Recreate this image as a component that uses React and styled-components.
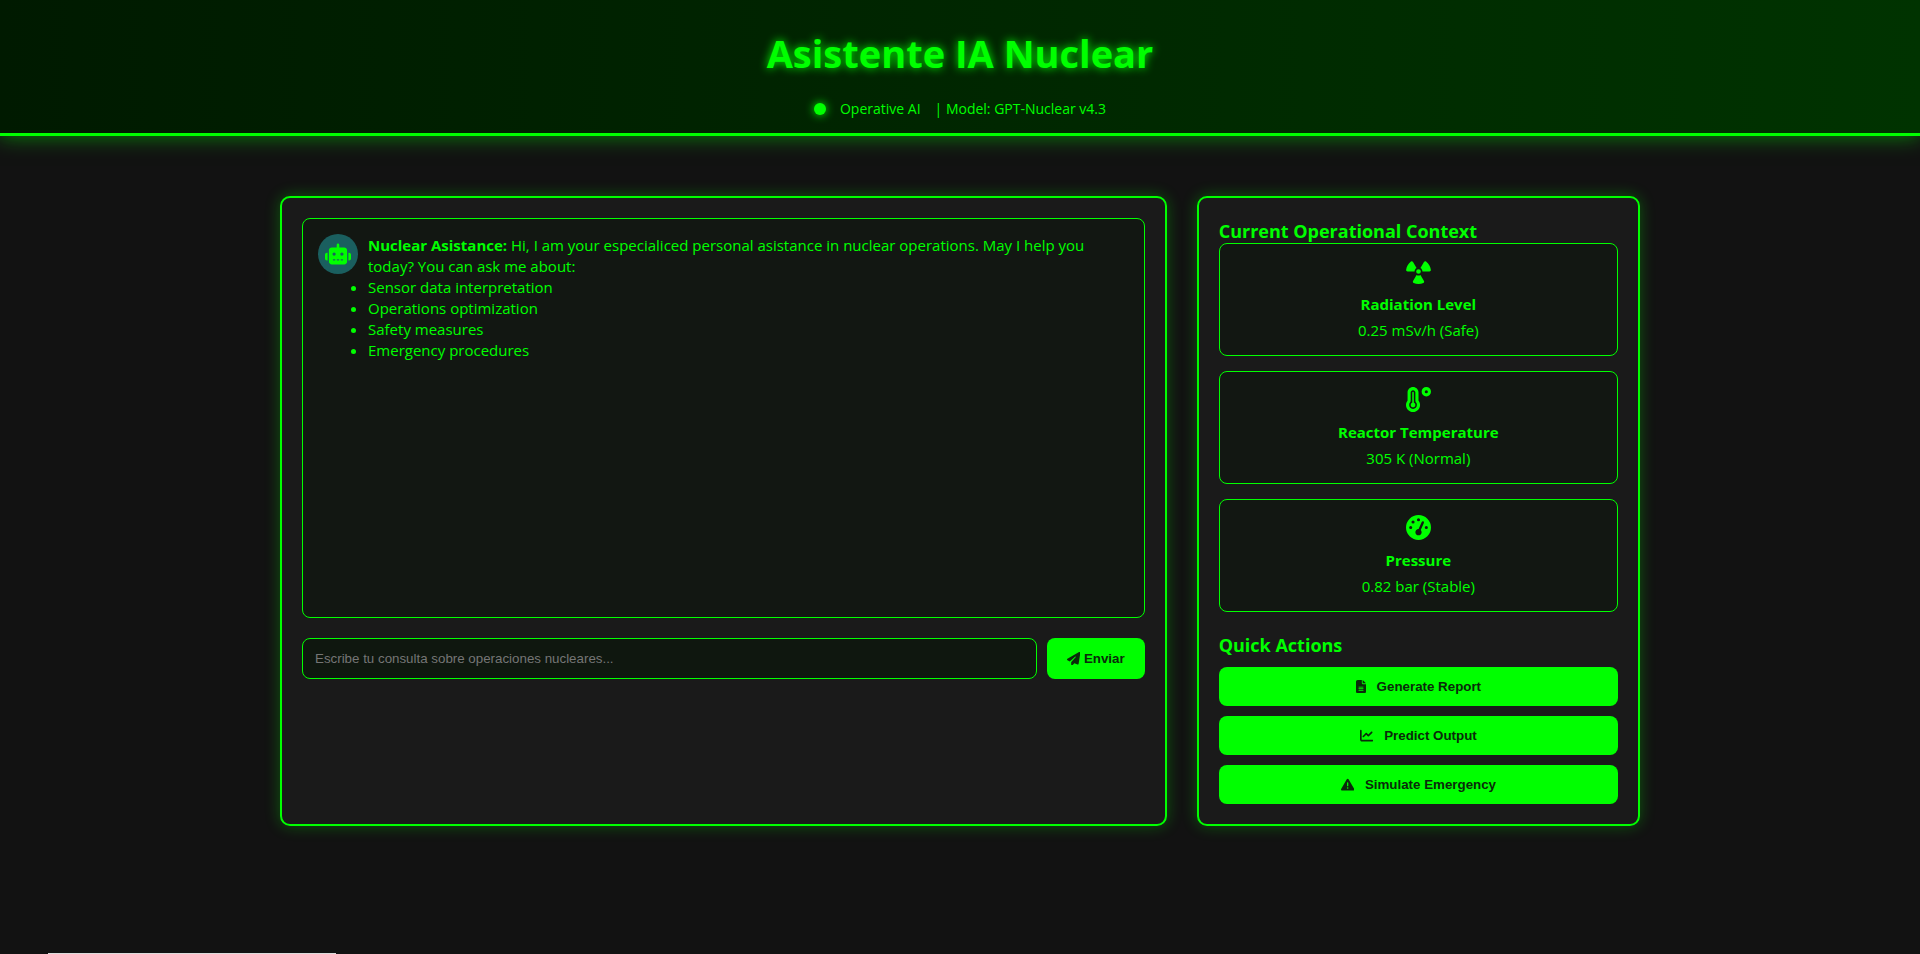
import React from "react";
import styled, { createGlobalStyle } from "styled-components";
import {
  FaRobot,
  FaPaperPlane,
  FaRadiation,
  FaTemperatureHigh,
  FaGaugeHigh,
  FaFileLines,
  FaChartLine,
  FaTriangleExclamation,
} from "react-icons/fa6";

const GlobalStyle = createGlobalStyle`
  * { box-sizing: border-box; margin: 0; padding: 0; }
  body {
    background: #121212;
    color: #00ff00;
    font-family: "Open Sans", "Noto Sans", sans-serif;
    font-size: 15px;
    line-height: 21px;
  }
`;

const Page = styled.div`
  min-height: 100vh;
  display: flex;
  flex-direction: column;
`;

const Header = styled.header`
  padding: 27px 20px 14px;
  text-align: center;
  background: linear-gradient(90deg, #001a00, #003300);
  border-bottom: 3px solid #00ff00;
  box-shadow: 0 0 20px rgba(0, 255, 0, 0.5);
`;

const Title = styled.h1`
  font-size: 38px;
  line-height: 52px;
  text-shadow: 0 0 10px #00ff00;
`;

const Status = styled.div`
  display: flex;
  align-items: center;
  justify-content: center;
  gap: 14px;
  margin-top: 19px;
  font-size: 14px;
`;

const StatusDot = styled.span`
  width: 12px;
  height: 12px;
  border-radius: 50%;
  background: #00ff00;
  box-shadow: 0 0 10px #00ff00;
`;

const Main = styled.main`
  display: grid;
  grid-template-columns: 2fr 1fr;
  gap: 30px;
  width: 100%;
  max-width: 1400px;
  margin: 40px auto 0;
  padding: 20px;
`;

const Panel = styled.section`
  min-width: 0;
  padding: 20px;
  background: #1a1a1a;
  border: 2px solid #00ff00;
  border-radius: 10px;
  box-shadow: 0 0 15px rgba(0, 255, 0, 0.3);
`;

const ChatLog = styled.div`
  height: 400px;
  padding: 15px;
  overflow-y: auto;
  background: #121712;
  border: 1px solid #00ff00;
  border-radius: 8px;
`;

const Message = styled.div`
  display: flex;
  align-items: flex-start;
  gap: 10px;
`;

const Avatar = styled.div`
  flex: none;
  display: flex;
  align-items: center;
  justify-content: center;
  width: 40px;
  height: 40px;
  border-radius: 50%;
  background: #1a5f5f;
  font-size: 26px;
`;

const MessageBody = styled.div`
  flex: 1;
  padding-top: 1px;
`;

const Topics = styled.ul`
  list-style: disc outside;
`;

const Composer = styled.form`
  display: flex;
  gap: 10px;
  margin-top: 20px;
`;

const QueryInput = styled.input`
  flex: 1;
  min-width: 0;
  height: 41px;
  padding: 0 12px;
  background: #0f170f;
  border: 1px solid #00ff00;
  border-radius: 8px;
  color: #00ff00;
  font-family: "Liberation Sans", sans-serif;

  &::placeholder {
    color: #757575;
    opacity: 1;
  }
`;

const Button = styled.button`
  display: flex;
  align-items: center;
  justify-content: center;
  gap: ${(p) => (p.$wide ? 11 : 4)}px;
  width: ${(p) => (p.$wide ? "100%" : "auto")};
  height: ${(p) => (p.$wide ? 39 : 41)}px;
  padding: 0 20px;
  background: #00ff00;
  border: none;
  border-radius: 8px;
  color: #0a2a0a;
  font-family: "Liberation Sans", sans-serif;
  font-weight: bold;
  cursor: pointer;

  svg {
    width: ${(p) => (p.$narrowIcon ? "10px" : "1em")};
  }
`;

const Heading = styled.h3`
  padding-top: 2px;
  font-size: 18px;
  line-height: 23px;
`;

const Readings = styled.div`
  display: flex;
  flex-direction: column;
  gap: 15px;
  margin-bottom: 20px;
`;

const Card = styled.article`
  display: flex;
  flex-direction: column;
  align-items: center;
  padding: 15px 15px 14px;
  background: #121712;
  border: 1px solid #00ff00;
  border-radius: 8px;
  text-align: center;

  svg {
    font-size: 25px;
    margin-bottom: 10px;
  }
`;

const CardValue = styled.p`
  margin-top: 5px;
`;

const Actions = styled.div`
  display: flex;
  flex-direction: column;
  gap: 10px;
  margin-top: 10px;
`;

const LinkPreview = styled.div`
  height: 1px;
  width: 288px;
  margin: auto 0 0 48px;
  background: #dcdcdc;
`;

const topics = [
  "Sensor data interpretation",
  "Operations optimization",
  "Safety measures",
  "Emergency procedures",
];

const readings = [
  { icon: FaRadiation, label: "Radiation Level", value: "0.25 mSv/h (Safe)" },
  { icon: FaTemperatureHigh, label: "Reactor Temperature", value: "305 K (Normal)" },
  { icon: FaGaugeHigh, label: "Pressure", value: "0.82 bar (Stable)" },
];

const actions = [
  { icon: FaFileLines, label: "Generate Report", narrow: true },
  { icon: FaChartLine, label: "Predict Output" },
  { icon: FaTriangleExclamation, label: "Simulate Emergency" },
];

export default function App() {
  return (
    <Page>
      <GlobalStyle />
      <Header>
        <Title>Asistente IA Nuclear</Title>
        <Status>
          <StatusDot />
          <span>Operative AI</span>
          <span>| Model: GPT-Nuclear v4.3</span>
        </Status>
      </Header>
      <Main>
        <Panel>
          <ChatLog>
            <Message>
              <Avatar>
                <FaRobot />
              </Avatar>
              <MessageBody>
                <p>
                  <strong>Nuclear Asistance:</strong> Hi, I am your especialiced personal
                  asistance in nuclear operations. May I help you today? You can ask me about:
                </p>
                <Topics>
                  {topics.map((topic) => (
                    <li key={topic}>{topic}</li>
                  ))}
                </Topics>
              </MessageBody>
            </Message>
          </ChatLog>
          <Composer onSubmit={(e) => e.preventDefault()}>
            <QueryInput
              type="text"
              aria-label="Consulta"
              placeholder="Escribe tu consulta sobre operaciones nucleares..."
            />
            <Button type="submit">
              <FaPaperPlane />
              Enviar
            </Button>
          </Composer>
        </Panel>
        <Panel as="aside">
          <Heading>Current Operational Context</Heading>
          <Readings>
            {readings.map(({ icon: Icon, label, value }) => (
              <Card key={label}>
                <Icon />
                <strong>{label}</strong>
                <CardValue>{value}</CardValue>
              </Card>
            ))}
          </Readings>
          <Heading>Quick Actions</Heading>
          <Actions>
            {actions.map(({ icon: Icon, label, narrow }) => (
              <Button key={label} type="button" $wide $narrowIcon={narrow}>
                <Icon />
                {label}
              </Button>
            ))}
          </Actions>
        </Panel>
      </Main>
      <LinkPreview />
    </Page>
  );
}
